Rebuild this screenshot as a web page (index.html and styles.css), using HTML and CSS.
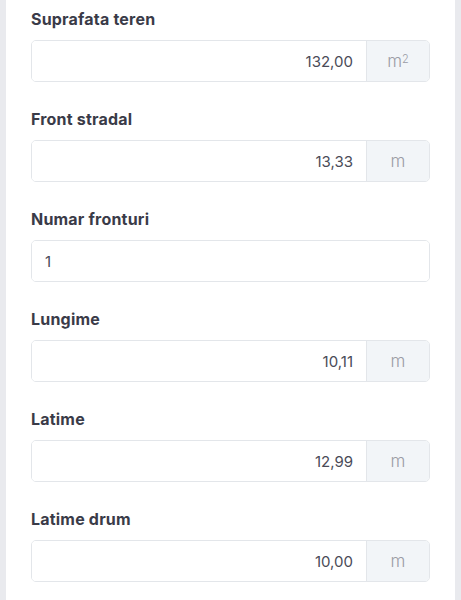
FILE: index.html
```html
<!DOCTYPE html>
<html lang="ro">
<head>
    <meta charset="UTF-8">
    <meta name="viewport" content="width=device-width, initial-scale=1.0">
    <title>Teren</title>
    <link rel="stylesheet" href="styles.css">
</head>
<body>
    <div class="card">
        <div class="field">
            <label class="field-label">Suprafata teren</label>
            <div class="input-group">
                <input class="form-input" type="text" value="132,00">
                <span class="addon">m<sup>2</sup></span>
            </div>
        </div>
        <div class="field">
            <label class="field-label">Front stradal</label>
            <div class="input-group">
                <input class="form-input" type="text" value="13,33">
                <span class="addon">m</span>
            </div>
        </div>
        <div class="field">
            <label class="field-label">Numar fronturi</label>
            <div class="input-group">
                <input class="form-input left" type="text" value="1">
            </div>
        </div>
        <div class="field">
            <label class="field-label">Lungime</label>
            <div class="input-group">
                <input class="form-input" type="text" value="10,11">
                <span class="addon">m</span>
            </div>
        </div>
        <div class="field">
            <label class="field-label">Latime</label>
            <div class="input-group">
                <input class="form-input" type="text" value="12,99">
                <span class="addon">m</span>
            </div>
        </div>
        <div class="field">
            <label class="field-label">Latime drum</label>
            <div class="input-group">
                <input class="form-input" type="text" value="10,00">
                <span class="addon">m</span>
            </div>
        </div>
    </div>
</body>
</html>
```

FILE: styles.css
```css
body {
    margin: 0;
    background: #e9eaee;
    font-family: Inter, 'Noto Sans', sans-serif;
    color: #3b3c4a;
}
.card {
    background: #ffffff;
    margin: 0 6px;
    padding: 8px 25px 20px;
    min-height: 600px;
    box-sizing: border-box;
}
.field {
    margin-bottom: 26px;
}
.field-label {
    display: block;
    font-size: 16px;
    font-weight: 700;
    line-height: 22px;
    letter-spacing: 0.2px;
    color: #3a3b48;
    margin-bottom: 10px;
}
.input-group {
    display: flex;
    height: 42px;
    border: 1px solid #e3e6ea;
    border-radius: 5px;
    box-sizing: border-box;
    overflow: hidden;
}
.form-input {
    flex: 1;
    min-width: 0;
    border: none;
    outline: none;
    padding: 0 13px;
    font-family: inherit;
    font-size: 15px;
    color: #4a4b57;
    text-align: right;
    background: #fff;
}
.form-input.left {
    text-align: left;
}
.addon {
    width: 62px;
    display: flex;
    align-items: center;
    justify-content: center;
    background: #f2f5f8;
    border-left: 1px solid #e3e6ea;
    color: #9a9ca5;
    font-size: 17px;
    font-weight: 300;
}
.addon sup {
    font-size: 11px;
    line-height: 0;
    position: relative;
    top: -2px;
}
```
